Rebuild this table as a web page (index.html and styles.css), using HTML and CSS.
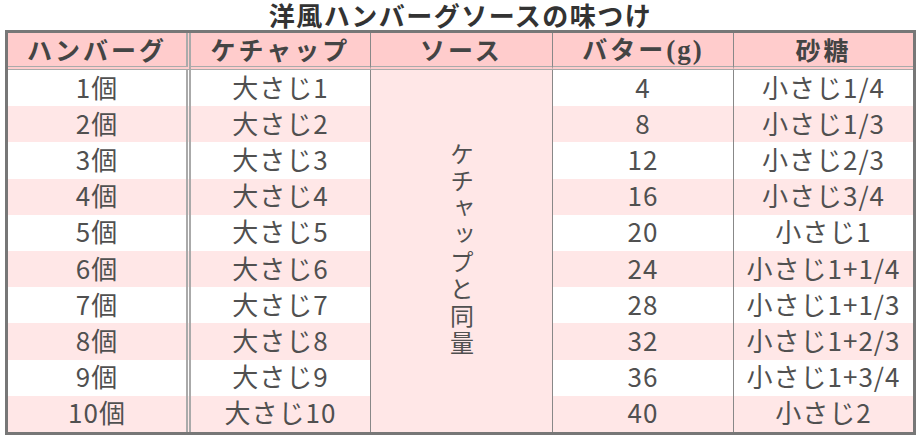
FILE: index.html
```html
<!DOCTYPE html>
<html lang="ja">
<head>
<meta charset="utf-8">
<title>洋風ハンバーグソースの味つけ</title>
<link rel="stylesheet" href="styles.css">
</head>
<body>
<div class="wrap">
  <h1 class="title">洋風ハンバーグソースの味つけ</h1>
  <table class="sauce">
    <colgroup>
      <col class="c1"><col class="c2"><col class="c3"><col class="c4"><col class="c5">
    </colgroup>
    <thead>
      <tr class="head">
        <th class="dbl">ハンバーグ</th>
        <th class="sep">ケチャップ</th>
        <th class="sep">ソース</th>
        <th class="sep">バター<span class="unit">(g)</span></th>
        <th>砂糖</th>
      </tr>
    </thead>
    <tbody>
      <tr class="odd"><td class="dbl">1個</td><td class="sep">大さじ1</td><td class="sep sauce-cell" rowspan="10"><span class="vert">ケチャップと同量</span></td><td class="sep">4</td><td>小さじ1/4</td></tr>
      <tr class="even"><td class="dbl">2個</td><td class="sep">大さじ2</td><td class="sep">8</td><td>小さじ1/3</td></tr>
      <tr class="odd"><td class="dbl">3個</td><td class="sep">大さじ3</td><td class="sep">12</td><td>小さじ2/3</td></tr>
      <tr class="even"><td class="dbl">4個</td><td class="sep">大さじ4</td><td class="sep">16</td><td>小さじ3/4</td></tr>
      <tr class="odd"><td class="dbl">5個</td><td class="sep">大さじ5</td><td class="sep">20</td><td>小さじ1</td></tr>
      <tr class="even"><td class="dbl">6個</td><td class="sep">大さじ6</td><td class="sep">24</td><td>小さじ1+1/4</td></tr>
      <tr class="odd"><td class="dbl">7個</td><td class="sep">大さじ7</td><td class="sep">28</td><td>小さじ1+1/3</td></tr>
      <tr class="even"><td class="dbl">8個</td><td class="sep">大さじ8</td><td class="sep">32</td><td>小さじ1+2/3</td></tr>
      <tr class="odd"><td class="dbl">9個</td><td class="sep">大さじ9</td><td class="sep">36</td><td>小さじ1+3/4</td></tr>
      <tr class="even"><td class="dbl">10個</td><td class="sep">大さじ10</td><td class="sep">40</td><td>小さじ2</td></tr>
    </tbody>
  </table>
</div>
</body>
</html>
```

FILE: styles.css
```css
html, body {
  margin: 0;
  padding: 0;
  background: #ffffff;
}
body {
  font-family: "Noto Sans CJK JP", "Noto Sans", sans-serif;
  color: #505050;
}
.wrap {
  width: 911px;
  margin: 0 0 0 5px;
}
.title {
  box-sizing: border-box;
  margin: 0;
  height: 30px;
  padding-top: 2px;
  line-height: 26px;
  font-size: 26px;
  font-weight: bold;
  letter-spacing: 1.5px;
  text-align: center;
  color: #333333;
}
.sauce {
  width: 911px;
  table-layout: fixed;
  border-collapse: separate;
  border-spacing: 0;
  border: 3px solid #777777;
}
.c1 { width: 183px; }
.c2 { width: 180px; }
.c3 { width: 182px; }
.c4 { width: 181px; }
.c5 { width: 179px; }
.sauce th, .sauce td {
  padding: 0;
  text-align: center;
  line-height: 1;
}
.sauce th {
  height: 33px;
  background: #ffcccc;
  font-size: 25px;
  font-weight: bold;
  color: #444444;
  letter-spacing: 3px;
  border-bottom: 4px double #aaaaaa;
}
.unit {
  font-family: "Liberation Serif", "DejaVu Serif", serif;
  font-size: 27px;
  letter-spacing: 2px;
}
.sauce td {
  height: 36.2px;
  font-size: 26px;
  letter-spacing: 1px;
  padding-bottom: 3px;
  box-sizing: border-box;
}
.dbl { border-right: 5px double #aaaaaa; }
.sep { border-right: 1px solid #888888; }
.odd td { background: #ffffff; }
.even td { background: #ffe7e7; }
.sauce td.sauce-cell { background: #ffe7e7; vertical-align: middle; padding-bottom: 0; }
.vert {
  display: inline-block;
  writing-mode: vertical-rl;
  font-size: 24px;
  letter-spacing: 3px;
  line-height: 1;
}
```
